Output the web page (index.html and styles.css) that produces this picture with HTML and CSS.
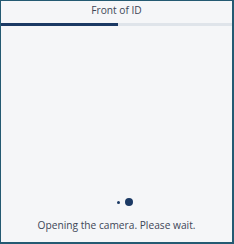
FILE: index.html
```html
<!DOCTYPE html>
<html lang="en">
<head>
  <meta charset="UTF-8">
  <title>Front of ID</title>
  <link rel="stylesheet" href="styles.css">
</head>
<body>
  <div class="frame">
    <div class="header">
      <div class="title">Front of ID</div>
      <div class="progress">
        <div class="progress-fill"></div>
      </div>
    </div>
    <div class="content">
      <div class="loader">
        <span class="dot small"></span>
        <span class="dot big"></span>
      </div>
      <div class="message">Opening the camera. Please wait.</div>
    </div>
  </div>
</body>
</html>
```

FILE: styles.css
```css
* {
  margin: 0;
  padding: 0;
  box-sizing: border-box;
}

html, body {
  width: 234px;
  height: 244px;
}

body {
  font-family: 'Open Sans', 'Noto Sans', sans-serif;
  background: #f5f6f8;
  color: #3d4657;
}

.frame {
  width: 234px;
  height: 244px;
  border: 1px solid #245a72;
  border-right-width: 2px;
  border-bottom-width: 2px;
  display: flex;
  flex-direction: column;
}

.header {
  padding-top: 1px;
}

.title {
  font-size: 10.2px;
  line-height: 16px;
  text-align: center;
  height: 21px;
}

.progress {
  height: 3px;
  background: #dfe4ea;
}

.progress-fill {
  width: 117px;
  height: 3px;
  background: #1b3964;
}

.content {
  flex: 1;
  display: flex;
  flex-direction: column;
  justify-content: flex-end;
  align-items: center;
  padding-bottom: 10px;
}

.loader {
  display: flex;
  align-items: center;
  gap: 5px;
  height: 8px;
  margin-bottom: 12px;
  margin-left: 16px;
}

.dot {
  display: block;
  border-radius: 50%;
  background: #1b3964;
}

.dot.small {
  width: 3px;
  height: 3px;
}

.dot.big {
  width: 8px;
  height: 8px;
}

.message {
  font-size: 10.2px;
  line-height: 14px;
}
```
